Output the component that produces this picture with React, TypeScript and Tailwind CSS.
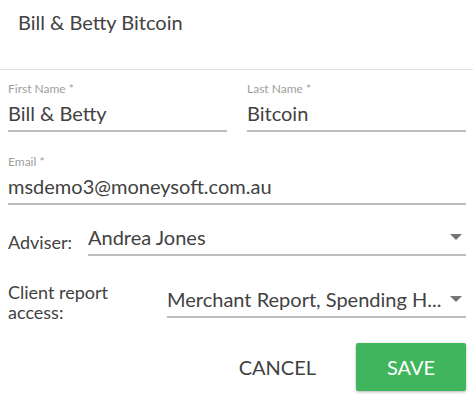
import { useState } from 'react'

function TextField({ label, value }: { label: string; value: string }) {
  return (
    <div className="flex flex-col">
      <label className="text-[12px] leading-[15px] text-[#9e9e9e]">{label}</label>
      <div className="mt-[5px] border-b-2 border-[#bdbdbd] pb-[5px] text-[20px] leading-[24px] text-[#424242]">
        {value}
      </div>
    </div>
  )
}

function SelectField({ value, className = '' }: { value: string; className?: string }) {
  return (
    <div className={`flex min-w-0 flex-1 items-center border-b-2 border-[#bdbdbd] pb-[5px] ${className}`}>
      <span className="min-w-0 flex-1 truncate text-[20px] leading-[24px] text-[#424242]">{value}</span>
      <svg width="12" height="6" viewBox="0 0 12 6" className="ml-2 mr-[4px] shrink-0">
        <path d="M0 0h12L6 6z" fill="#757575" />
      </svg>
    </div>
  )
}

export default function App() {
  const [client] = useState({
    firstName: 'Bill & Betty',
    lastName: 'Bitcoin',
    email: 'msdemo3@moneysoft.com.au',
    adviser: 'Andrea Jones',
    reports: 'Merchant Report, Spending H...',
  })

  return (
    <div className="h-[400px] w-[473px] overflow-hidden bg-white font-['Lato',sans-serif]">
      {/* Header */}
      <div className="h-[70px] border-b border-[#e0e0e0] pl-[18px] pt-[10px]">
        <h1 className="text-[20px] leading-[24px] text-[#424242]">Bill &amp; Betty Bitcoin</h1>
      </div>

      <div className="pl-[8px] pr-[7px]">
        {/* Names */}
        <div className="mt-[11px] grid grid-cols-2 gap-[20px]">
          <TextField label="First Name *" value={client.firstName} />
          <TextField label="Last Name *" value={client.lastName} />
        </div>

        {/* Email */}
        <div className="mt-[22px]">
          <TextField label="Email *" value={client.email} />
        </div>

        {/* Adviser */}
        <div className="mt-[20px] flex items-start">
          <span className="mt-[7px] w-[80px] shrink-0 text-[18px] leading-[20px] text-[#424242]">Adviser:</span>
          <SelectField value={client.adviser} />
        </div>

        {/* Report access */}
        <div className="mt-[26px] flex items-start">
          <span className="w-[159px] shrink-0 text-[18px] leading-[20px] text-[#424242]">
            Client report
            <br />
            access:
          </span>
          <SelectField value={client.reports} className="mt-[5px]" />
        </div>

        {/* Actions */}
        <div className="mt-[21px] flex items-center justify-end">
          <button className="mr-[40px] text-[20px] leading-[24px] text-[#424242] uppercase">Cancel</button>
          <button className="h-[48px] w-[110px] rounded-[2px] bg-[#41b55d] text-[20px] leading-[24px] text-white uppercase shadow-[0_1px_3px_rgba(0,0,0,0.3)]">
            Save
          </button>
        </div>
      </div>
    </div>
  )
}
